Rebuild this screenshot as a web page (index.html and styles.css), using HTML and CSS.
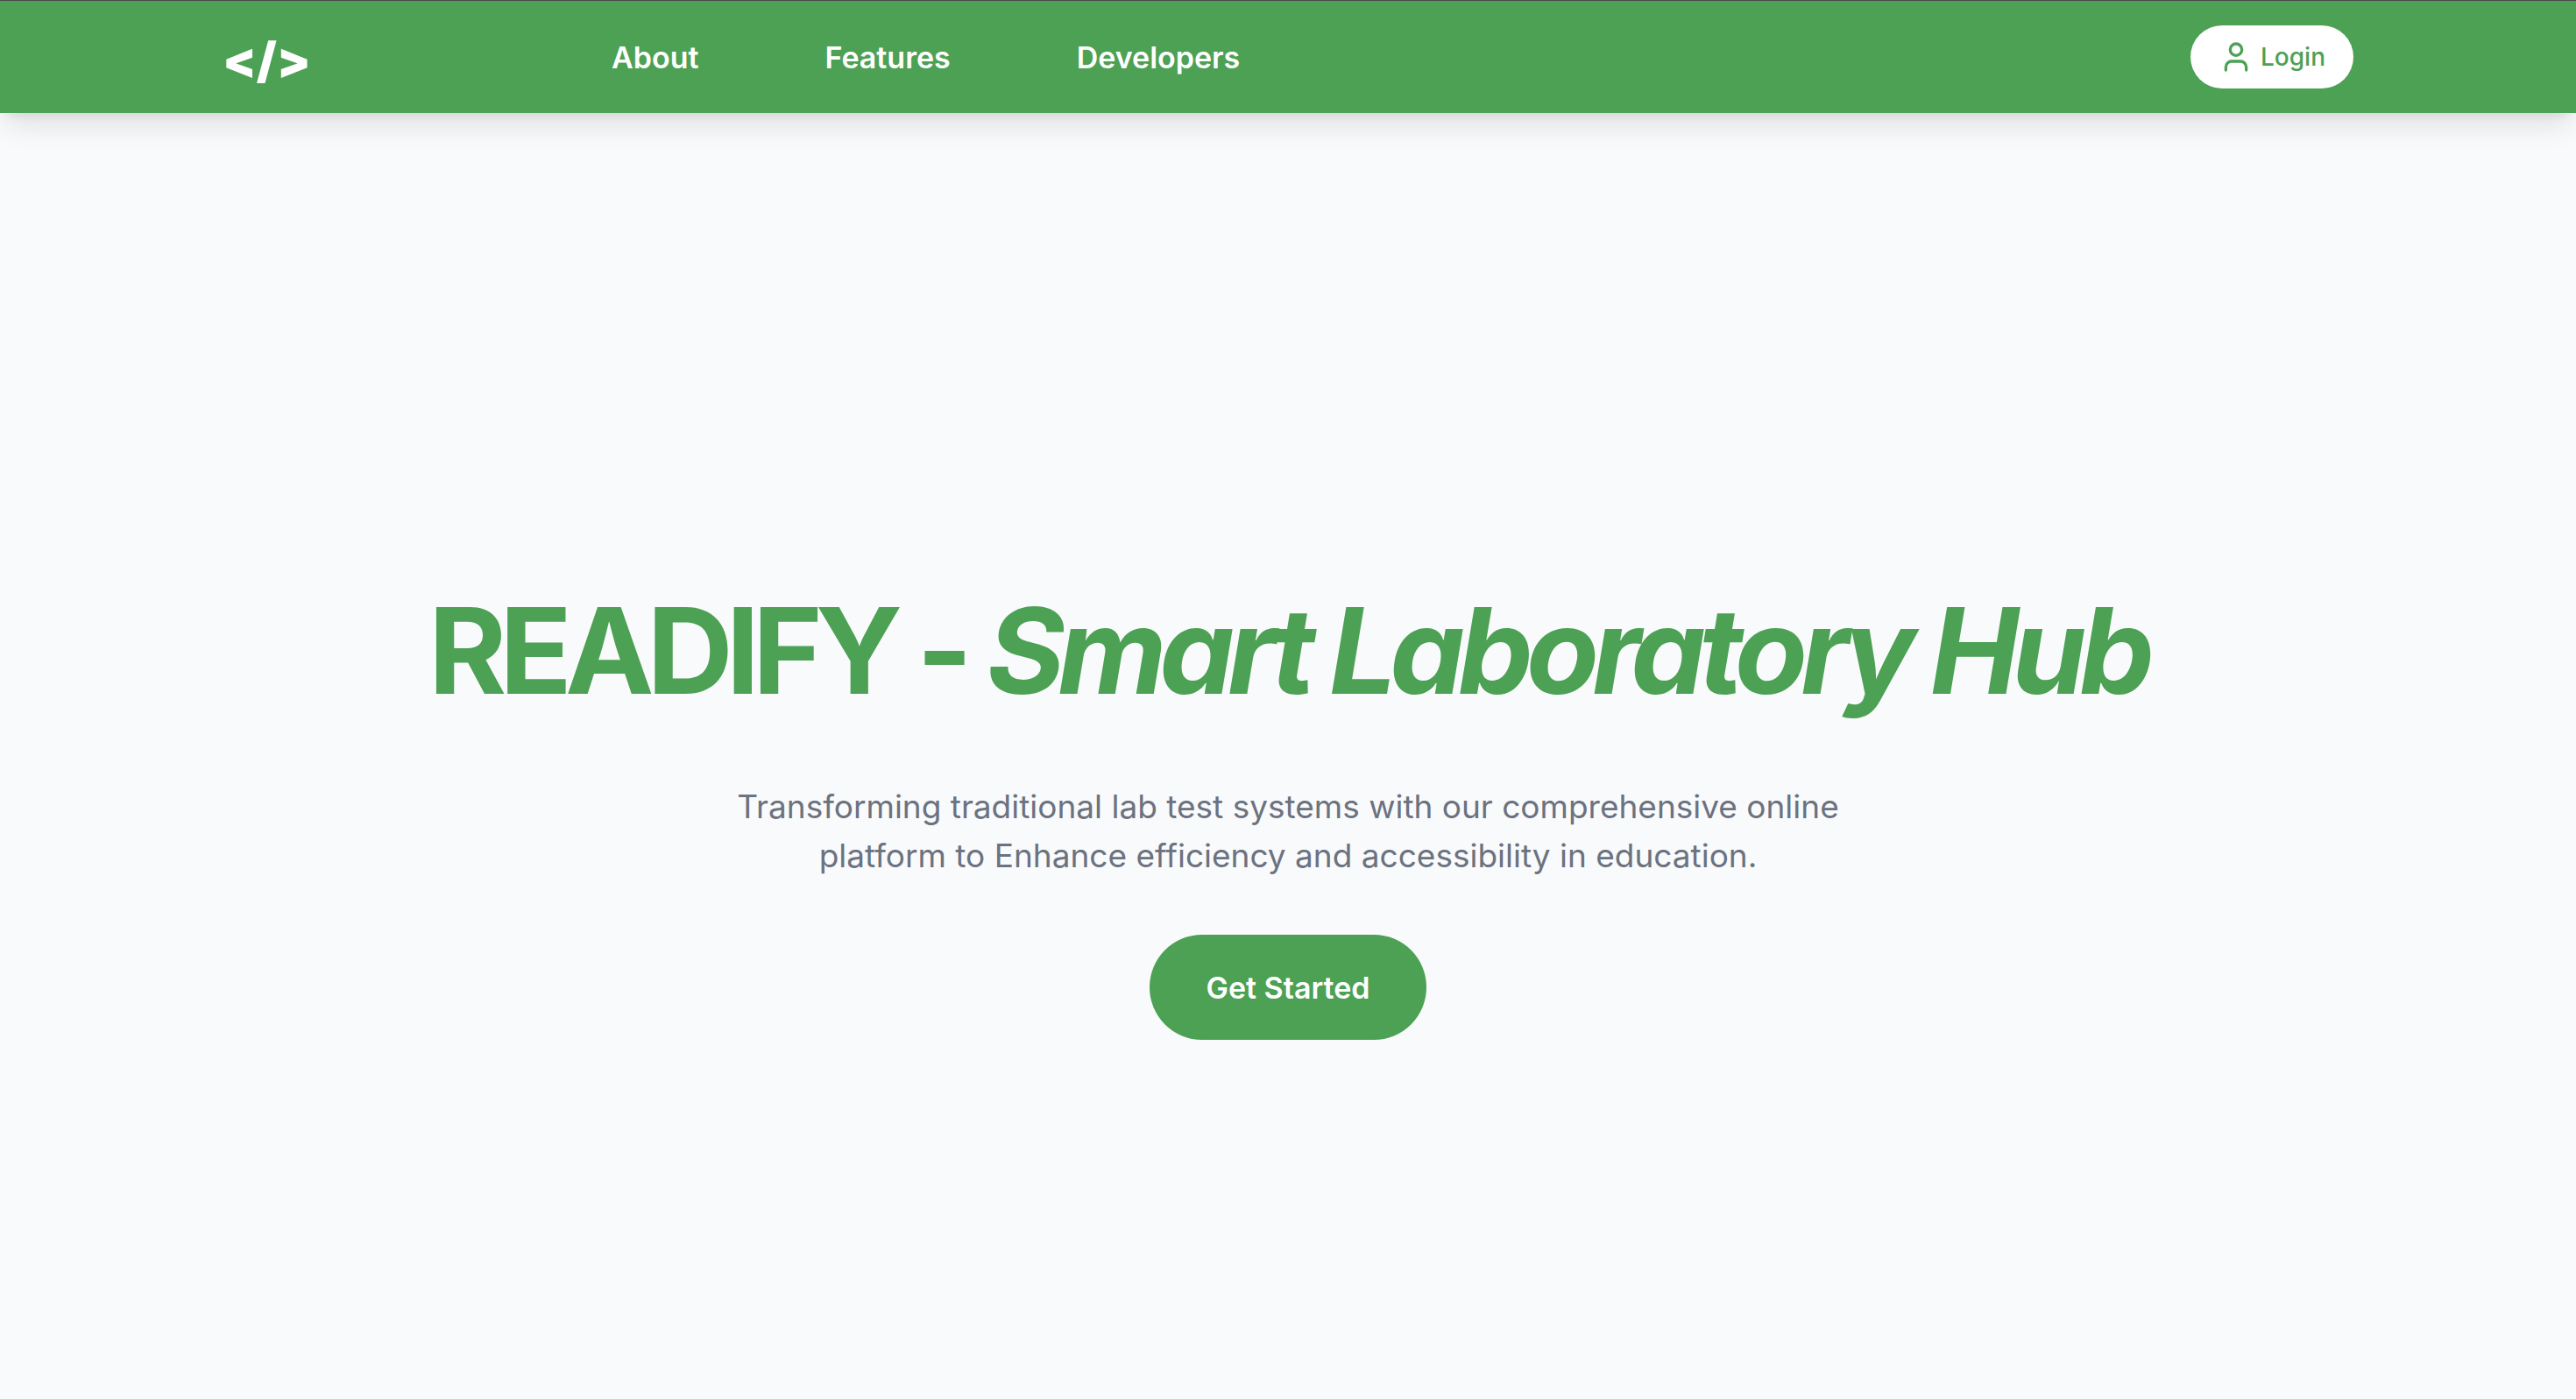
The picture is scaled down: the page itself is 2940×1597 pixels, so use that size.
FILE: index.html
```html
<!DOCTYPE html>
<html lang="en">
<head>
<meta charset="utf-8">
<meta name="viewport" content="width=device-width, initial-scale=1">
<title>Readify</title>
<link rel="stylesheet" href="styles.css">
</head>
<body>
<header class="header">
  <div class="bar">
    <a class="brand" href="#" aria-label="Home">&lt;/&gt;</a>
    <nav class="nav">
      <a href="#about">About</a>
      <a href="#features">Features</a>
      <a href="#developers">Developers</a>
    </nav>
    <button class="login" type="button">
      <svg class="user" viewBox="0 0 24 24" fill="none" stroke="currentColor" stroke-width="2" stroke-linecap="round" stroke-linejoin="round" aria-hidden="true"><path d="M19 21v-2a4 4 0 0 0-4-4H9a4 4 0 0 0-4 4v2"/><circle cx="12" cy="7" r="4"/></svg>
      Login
    </button>
  </div>
</header>
<main class="hero">
  <h1 class="title">READIFY - <em>Smart Laboratory Hub</em></h1>
  <p class="lead">Transforming traditional lab test systems with our comprehensive online platform to Enhance efficiency and accessibility in education.</p>
  <button class="start" type="button">Get Started</button>
</main>
</body>
</html>
```
FILE: styles.css
```css
* { box-sizing: border-box; }
body {
  margin: 0;
  min-height: 100vh;
  display: flex;
  flex-direction: column;
  background: #f9fafb;
  color: #4ca154;
  font-family: Inter, "Liberation Sans", sans-serif;
}
button { border: 0; font-family: inherit; cursor: pointer; }
.header {
  background: #4ca154;
  border-top: 1px solid #4a4a4c;
  box-shadow: 0 20px 30px -6px rgba(0, 0, 0, 0.1), 0 8px 12px -8px rgba(0, 0, 0, 0.1);
}
.bar {
  display: flex;
  align-items: center;
  height: 128px;
  padding: 0 254px;
}
.brand {
  width: 444px;
  padding-top: 8px;
  color: #fff;
  font-size: 56px;
  font-weight: 900;
  text-decoration: none;
}
.nav { display: flex; gap: 144px; }
.nav a {
  color: #fff;
  font-size: 34px;
  font-weight: 600;
  text-decoration: none;
}
.login {
  display: flex;
  align-items: center;
  gap: 8px;
  height: 72px;
  margin-left: auto;
  padding: 0 32px;
  border-radius: 36px;
  background: #fff;
  color: #4ca154;
  font-size: 28px;
  font-weight: 500;
}
.user { width: 40px; height: 40px; }
.hero {
  flex: 1;
  display: flex;
  flex-direction: column;
  align-items: center;
  justify-content: center;
  padding: 132px 64px 0;
  text-align: center;
}
.title {
  margin: 0;
  font-size: 136px;
  line-height: 144px;
  font-weight: 700;
  letter-spacing: -8px;
}
.lead {
  max-width: 1344px;
  margin: 78px 0 62px;
  color: #6b7280;
  font-size: 37px;
  line-height: 56px;
}
.start {
  height: 120px;
  padding: 0 64px;
  border-radius: 60px;
  background: #4ca154;
  color: #fff;
  font-size: 34px;
  font-weight: 600;
}
```
